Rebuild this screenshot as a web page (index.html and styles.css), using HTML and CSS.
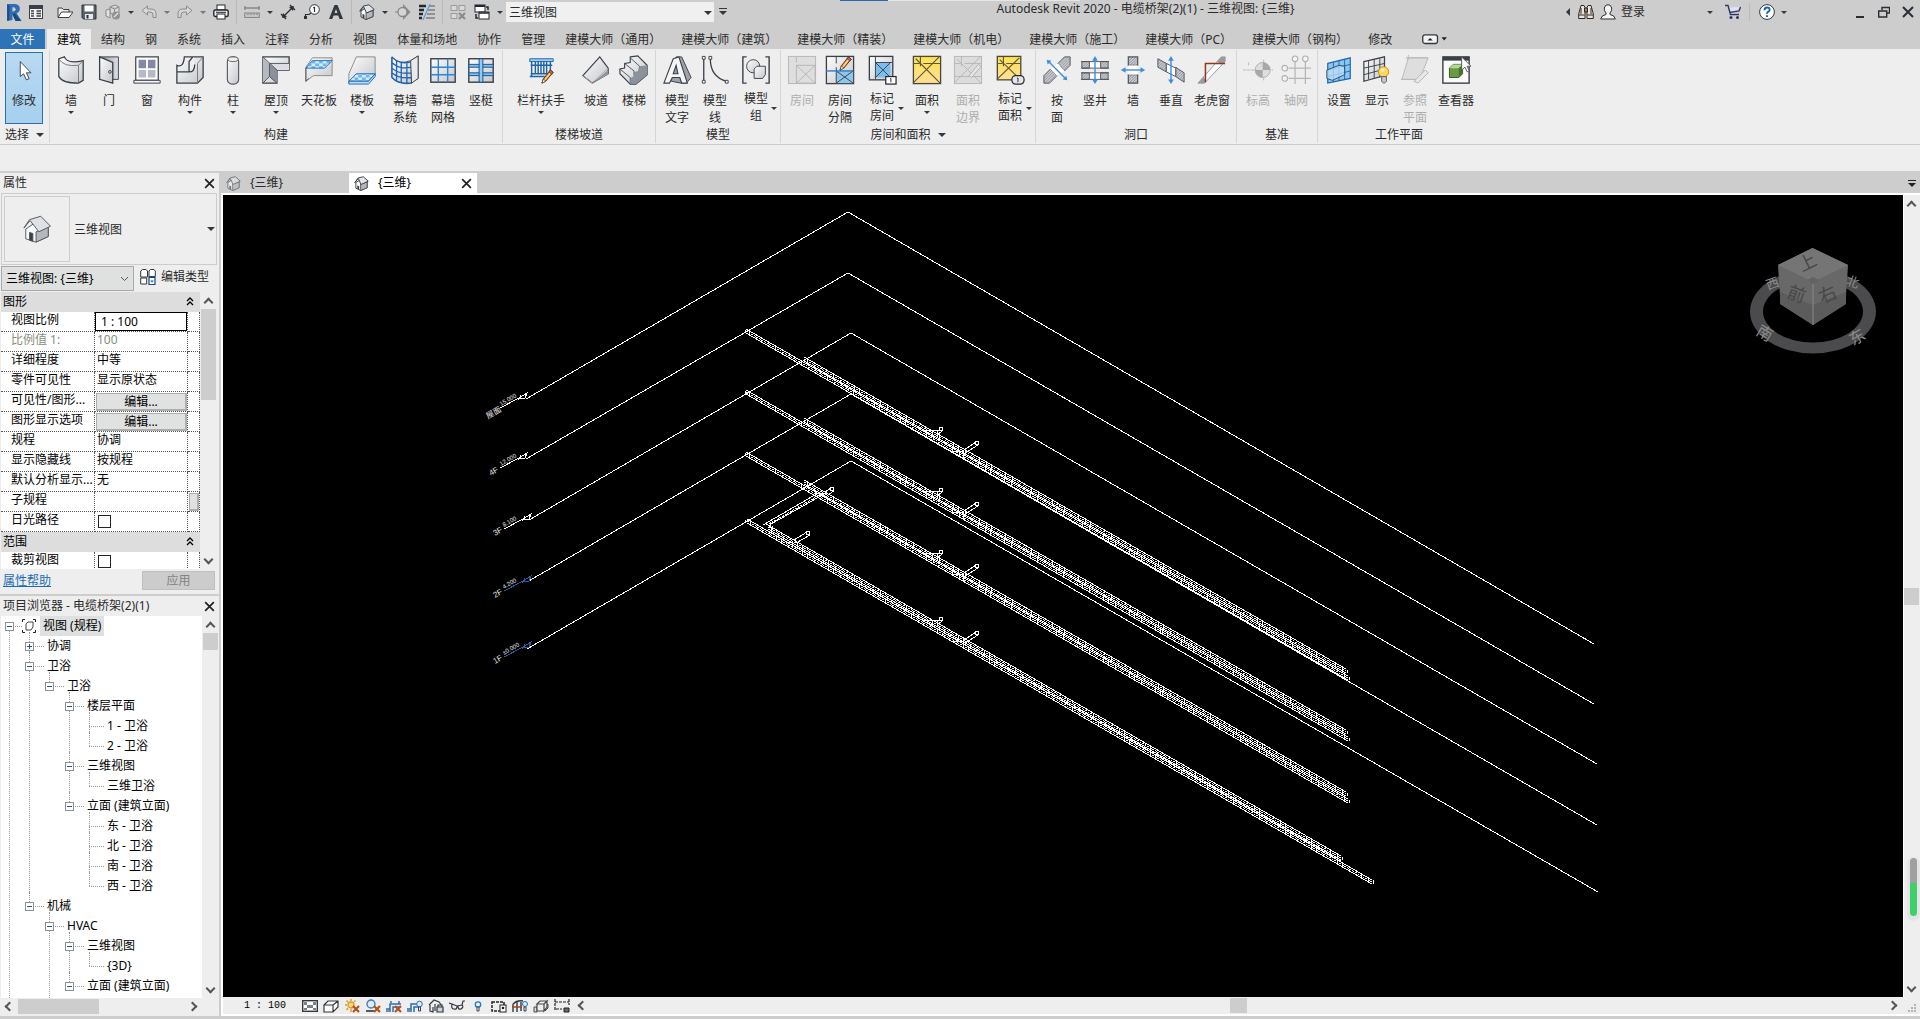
FILE: index.html
```html
<!DOCTYPE html>
<html lang="zh-CN">
<head>
<meta charset="utf-8">
<title>Autodesk Revit 2020 - 电缆桥架(2)(1) - 三维视图: {三维}</title>
<link rel="stylesheet" href="styles.css">
</head>
<body>
<svg class="defs" aria-hidden="true">
  <defs>
    <linearGradient id="metal" x1="0" y1="0" x2="1" y2="1"><stop offset="0" stop-color="#fdfdfd"/><stop offset="1" stop-color="#c3c6cb"/></linearGradient>
    <linearGradient id="steel" x1="0" y1="0" x2="1" y2="0"><stop offset="0" stop-color="#8d939b"/><stop offset="1" stop-color="#dfe1e5"/></linearGradient>
    <linearGradient id="gold" x1="0" y1="0" x2="0" y2="1"><stop offset="0" stop-color="#ffe14f"/><stop offset="1" stop-color="#ffdf96"/></linearGradient>
    <pattern id="hatch" width="3" height="3" patternUnits="userSpaceOnUse"><rect width="3" height="3" fill="#d3d5d8"/><path d="M0 3L3 0" stroke="#777d86" stroke-width="1"/></pattern>
    <pattern id="checks" width="8" height="6" patternUnits="userSpaceOnUse"><rect width="8" height="6" fill="#d6ecfc"/><path d="M0 0h4v3H0zM4 3h4v3H4z" fill="#6fb8ee"/></pattern>
    <symbol id="house" viewBox="0 0 16 16"><path d="M2 7v6l5 2.500 7-3V6L9.500 2z" fill="#fafafa" stroke="#3b4048"/><path d="M7 15.500V8.500l7-2v6z" fill="#b4b7bb" stroke="#3b4048" stroke-width=".8"/><path d="M.8 7.200L4.500 2 10 .8l5.200 4.700L7.500 9 4.500 2.500z" fill="#e4e5e7" stroke="#3b4048"/><path d="M3.500 13.500V10l2 .8v3.500z" fill="#3b4048"/></symbol>
    <symbol id="pencil" viewBox="0 0 14 16"><path d="M1 15l1.500-4.500L10 1l3 2.500L5 13z" fill="#e98a2d" stroke="#4a2f16"/><path d="M4 11.500L11 3" stroke="#ffd790" stroke-width="1.500"/><path d="M10 1l3 2.500-1.500 2-3-2.500z" fill="#c9665c" stroke="#4a2f16" stroke-width=".7"/><path d="M1 15l1.500-4.500L5 13z" fill="#fff" stroke="#4a2f16" stroke-width=".7"/></symbol>
    <symbol id="cross" viewBox="0 0 8 8"><path d="M1 1l6 6M7 1L1 7" stroke="#b3521b" stroke-width="2.200"/></symbol>
  </defs>
</svg>
<div class="app">
  <header class="titlebar">
    <div class="qat">
      <button class="app-btn" aria-label="Revit"><svg viewBox="0 0 16 18"><path d="M2 1h7.500q4.500.5 4.500 4.500 0 3-3 4.300L15.500 17H10L7 11v5l-5 1z" fill="#2f6db3"/><path d="M7 4v4q3 .3 3-2T7 4z" fill="#cdcdcd"/><path d="M2 1l2 2v13l-2 1z" fill="#1b4c86"/><path d="M7 11l2-1.500L15.500 17H10z" fill="#174a86"/></svg></button>
      <button class="home-btn" aria-label="主页"><svg class="s16" viewBox="0 0 16 16"><rect x="1.500" y="1.500" width="13" height="13" fill="#f4f4f4" stroke="#3b4048"/><path d="M1 2h14v3H1z" fill="#3b4048"/><path d="M3 7h3M3 9.500h3M3 12h3M8.500 7H13M8.500 9.500H13M8.500 12H13" stroke="#3b4048" stroke-width="1.500"/></svg></button>
      <button class="q" aria-label="打开"><svg class="s16" viewBox="0 0 16 16"><path d="M1 13V4h4l1.500 1.500H12V8" fill="#eee" stroke="#3b4048"/><path d="M1 13.500L4.500 8H16l-4 5.500z" fill="#fff" stroke="#3b4048"/></svg></button>
      <button class="q" aria-label="保存"><svg class="s16" viewBox="0 0 16 16"><path d="M1 1h14v14H2.500L1 13.500z" fill="#5b626c" stroke="#2b3038"/><rect x="3.500" y="1.500" width="9" height="6" fill="#fff"/><rect x="4" y="10" width="8" height="5" fill="#e5e7ea"/><rect x="5.500" y="11" width="2" height="3.500" fill="#2b3038"/></svg></button>
      <button class="q" aria-label="同步"><svg class="s16" viewBox="0 0 16 16"><path d="M5 3l5-2 4 2v6l-4 2-5-2zM5 3l4.500 2L14 3M9.500 5v6" fill="#d8d8d8" stroke="#888"/><path d="M1 6l4-1v9l-4-2z" fill="#e2e2e2" stroke="#888"/><circle cx="11" cy="11.500" r="4" fill="#929292"/><path d="M9 13l4-4" stroke="#ddd" stroke-width="1.500"/></svg></button>
      <button class="dd" aria-label="更多"></button>
      <button class="q" aria-label="放弃"><svg class="s16" viewBox="0 0 16 16"><path d="M1 6.500L6.500 2v3H10q5 0 5 5v3.500h-3V11q0-3-3-3H6.500v3z" fill="#d7d7d7" stroke="#8c8c8c"/></svg></button>
      <button class="dd faded" aria-label="更多"></button>
      <button class="q" aria-label="重做"><svg class="s16" viewBox="0 0 16 16"><path d="M15 6.500L9.500 2v3H6q-5 0-5 5v3.500h3V11q0-3 3-3h2.500v3z" fill="#d7d7d7" stroke="#8c8c8c"/></svg></button>
      <button class="dd faded" aria-label="更多"></button>
      <button class="q" aria-label="打印"><svg class="s16" viewBox="0 0 16 16"><rect x="4" y="1" width="8" height="5" fill="#fff" stroke="#23282f"/><rect x=".8" y="6" width="14.400" height="6.500" rx="1.500" fill="#eee" stroke="#23282f" stroke-width="1.400"/><rect x="4" y="10" width="8" height="5" fill="#fff" stroke="#23282f"/><path d="M3 8.300h10" stroke="#23282f"/></svg></button>
      <i class="qsep"></i>
      <button class="q" aria-label="测量"><svg class="s16" viewBox="0 0 16 16"><path d="M0 4h16M1 2v4M15 2v4" stroke="#888" stroke-width="1.300"/><rect x=".7" y="9" width="14.600" height="4.500" fill="#c4c4c4" stroke="#888"/><path d="M4 9v2M7 9v2M10 9v2M13 9v2" stroke="#888"/></svg></button>
      <button class="dd" aria-label="更多"></button>
      <button class="q" aria-label="尺寸标注"><svg class="s16" viewBox="0 0 16 16"><path d="M3 13L13 3M1 10l5 5M10 1l5 5" stroke="#2b3038" stroke-width="1.300"/><path d="M2 14l1-5 4 4zM14 2l-1 5-4-4z" fill="#2b3038"/></svg></button>
      <button class="q" aria-label="标记"><svg class="s16" viewBox="0 0 16 16"><circle cx="10.500" cy="5.500" r="4.800" fill="#fff" stroke="#2b3038"/><path d="M10.500 3v5M9.300 4l1.200-1M1.500 15v-4.500H5L7 9" fill="none" stroke="#2b3038" stroke-width="1.200"/><rect x="0" y="12" width="3" height="3" fill="#2b3038"/></svg></button>
      <button class="q" aria-label="文字"><svg class="s16" viewBox="0 0 16 16"><path d="M6.500 1h3L15 15h-3.500l-1.200-3.500H5.600L4.300 15H1zM8 5L6.500 9h3z" fill="#33383f"/></svg></button>
      <i class="qsep"></i>
      <button class="q" aria-label="三维视图"><svg class="s16"><use href="#house"/></svg></button>
      <button class="dd" aria-label="更多"></button>
      <button class="q" aria-label="剖面"><svg class="s16" viewBox="0 0 16 16"><path d="M8 0l7.500 8L8 16z" fill="#888"/><circle cx="7.500" cy="8" r="4.500" fill="#d5d5d5" stroke="#888" stroke-width="1.300"/><path d="M0 8h3" stroke="#888"/></svg></button>
      <button class="q" aria-label="细线"><svg class="s16" viewBox="0 0 16 16"><path d="M0 2h7M0 6h5M0 10h4M0 14h3" stroke="#23282f" stroke-width="2.600"/><path d="M10 2h6M9 6h7M8 10h8M7 14h9" stroke="#555"/><path d="M11 0L4 16" stroke="#4aa0e8" stroke-width="1.200"/></svg></button>
      <i class="qsep"></i>
      <button class="q" aria-label="关闭隐藏窗口"><svg class="s16" viewBox="0 0 16 16"><path d="M1 1.500h6v5H1zM9 1.500h6v5H9zM1 9.500h6v5H1z" fill="#d9d9d9" stroke="#999"/><path d="M9 9l6 6M15 9l-6 6" stroke="#888" stroke-width="2"/></svg></button>
      <button class="q" aria-label="切换窗口"><svg class="s16" viewBox="0 0 16 16"><rect x="1" y="1" width="10" height="7" fill="#fff" stroke="#23282f"/><path d="M1 2h10" stroke="#23282f" stroke-width="2"/><rect x="5" y="8" width="10" height="7" fill="#fff" stroke="#23282f"/><path d="M5 9h10M2 10v4h2M14 6V3h-2" fill="none" stroke="#23282f" stroke-width="1.500"/></svg></button>
      <button class="dd" aria-label="更多"></button>
      <button class="view-combo" role="combobox" aria-label="视图"><span>三维视图</span><i class="tri"></i></button>
      <button class="customize" aria-label="自定义"><svg viewBox="0 0 8 8" class="s8"><path d="M0 .5h8" stroke="#33383f"/><path d="M0 3h8L4 7z" fill="#33383f"/></svg></button>
    </div>
    <div class="title">Autodesk Revit 2020 - 电缆桥架(2)(1) - 三维视图: {三维}</div>
    <div class="info">
      <button class="collapse" aria-label="折叠"><svg viewBox="0 0 4 8"><path d="M4 0v8L0 4z" fill="#33383f"/></svg></button>
      <button class="q" aria-label="搜索"><svg class="s16" viewBox="0 0 16 16"><path d="M3 1.500h3l1 2v11H.7V10zM13 1.500h-3l-1 2v11h6.300V10zM6.500 4h3v4h-3z" fill="#e9e5e0" stroke="#33261f"/><path d="M1 11h5.500M9.500 11H15M3 4v6M13 4v6" stroke="#33261f"/></svg></button>
      <button class="login"><svg class="s16" viewBox="0 0 16 16"><path d="M.7 15q.8-4 5.300-4.500V9Q4 7 4.300 4 5 .7 8 .7T11.700 4Q12 7 10 9v1.500q4.500.5 5.300 4.500z" fill="#f5f5f5" stroke="#2c2f35"/></svg><span>登录</span><i class="tri small"></i></button>
      <button class="cart" aria-label="商店"><svg class="s16" viewBox="0 0 16 16"><path d="M0 1.500h3l2.500 9H14M3.500 3.500L5 8.500l9-1.500 1.500-4" fill="#dfe3ee" stroke="#2b3463" stroke-width="1.400"/><circle cx="6" cy="13.500" r="1.500" fill="#2b3463"/><circle cx="12.500" cy="13.500" r="1.500" fill="#2b3463"/></svg></button>
      <button class="help" aria-label="帮助"><svg class="s16" viewBox="0 0 16 16"><circle cx="8" cy="8" r="7.400" fill="#fff" stroke="#33383f"/><path d="M5.500 6.200q0-2.700 2.600-2.700t2.500 2.200q0 1.300-1.300 2T8 9.800" fill="none" stroke="#1763a6" stroke-width="1.900"/><path d="M7 11.200h2v1.800H7z" fill="#1763a6"/></svg><i class="tri small"></i></button>
      <div class="win">
        <button aria-label="最小化"><svg viewBox="0 0 12 12"><path d="M2 11h8" stroke="#2a2d33" stroke-width="2"/></svg></button>
        <button aria-label="还原"><svg viewBox="0 0 12 12"><path d="M4 4V1.500h7.500V7H9M4 1.500h7.500" fill="none" stroke="#2a2d33" stroke-width="1.400"/><path d="M.7 5h8v6h-8z" fill="none" stroke="#2a2d33" stroke-width="1.400"/></svg></button>
        <button aria-label="关闭"><svg viewBox="0 0 12 12"><path d="M1 1l10 10M11 1L1 11" stroke="#2a2d33" stroke-width="2"/></svg></button>
      </div>
    </div>
    <i class="recorder"></i>
  </header>

  <nav class="tabs">
    <button class="file">文件</button><button class="on">建筑</button><button>结构</button><button>钢</button><button>系统</button><button>插入</button><button>注释</button><button>分析</button><button>视图</button><button>体量和场地</button><button>协作</button><button>管理</button><button>建模大师（通用）</button><button>建模大师（建筑）</button><button>建模大师（精装）</button><button>建模大师（机电）</button><button>建模大师（施工）</button><button>建模大师（PC）</button><button>建模大师（钢构）</button><button>修改</button>
    <button class="mini" aria-label="最小化功能区"><svg viewBox="0 0 24 10"><rect x=".7" y=".7" width="13.600" height="8" rx="2" fill="#f3f3f3" stroke="#33383f" stroke-width="1.200"/><path d="M5 6h5L7.500 3.500zM18 3h5l-2.500 3z" fill="#222"/></svg></button>
  </nav>

  <section class="ribbon">
    <div class="panel select">
      <div class="items"><button class="rb active"><svg class="s32" viewBox="0 0 32 32"><path d="M12 7v16l3.500-3 3 6.500 3-1.300-3-6.200h5z" fill="#fff" stroke="#3b4048"/></svg><span>修改</span></button></div>
      <div class="cap">选择 <i class="tri"></i></div>
    </div>
    <div class="panel">
      <div class="items">
        <button class="rb"><svg class="s32" viewBox="0 0 32 32"><path d="M3 4l6-2q3 8 20 4v21l-5 3Q7 30 3 23z" fill="url(#metal)" stroke="#3b4048" stroke-width="1.400"/><path d="M3 4q5 9 21 7l5-5M24 11v18" fill="none" stroke="#777" stroke-width="1"/></svg><span>墙</span><i class="tri"></i></button>
        <button class="rb"><svg class="s32" viewBox="0 0 32 32"><path d="M6 2h20v24H6z" fill="url(#steel)" stroke="#3b4048"/><path d="M6 2l14 6v22L6 26z" fill="url(#metal)" stroke="#3b4048" stroke-width="1.400"/><circle cx="17" cy="18" r="1.500" fill="none" stroke="#3b4048"/></svg><span>门</span></button>
        <button class="rb"><svg class="s32" viewBox="0 0 32 32"><rect x="4" y="2" width="24" height="25" fill="#fff" stroke="#3b4048" stroke-width="1.300"/><path d="M7 5h8v9H7zM17 5h8v9h-8z" fill="#828ba3"/><path d="M7 16h8v8H7zM17 16h8v8h-8z" fill="#b7bac4"/><path d="M2 27h28v3H2z" fill="#f5f5f5" stroke="#3b4048"/></svg><span>窗</span></button>
        <button class="rb wide"><svg class="s32" viewBox="0 0 32 32"><path d="M2 11q7 3 8-9h9l-4 5v11H2zM20 2h10v22l-6 6H2V18h13q6 0 6-8" fill="url(#metal)" stroke="#3b4048" stroke-width="1.400"/><path d="M24 9v21M30 2l-6 7" stroke="#777"/></svg><span>构件</span><i class="tri"></i></button>
        <button class="rb"><svg class="s32" viewBox="0 0 32 32"><rect x="10" y="2" width="12" height="29" rx="5" fill="url(#metal)" stroke="#55595f" stroke-width="1.200"/><ellipse cx="16" cy="4.500" rx="5.500" ry="2.500" fill="#eee" stroke="#666"/></svg><span>柱</span><i class="tri"></i></button>
        <button class="rb wide"><svg class="s32" viewBox="0 0 32 32"><path d="M2 2h28v14H17v14H2z" fill="url(#metal)" stroke="#3b4048" stroke-width="1.400"/><path d="M2 2l7 7v14l-7 7z" fill="#b6b9bf"/><path d="M9 9h21v7H17z" fill="#dcdde6"/><path d="M9 9l8 7v14l-8-7z" fill="#8c9098"/><path d="M2 2l15 14M9 9h21M9 9v14l-7 7M9 23l8 7" fill="none" stroke="#50555e"/></svg><span>屋顶</span><i class="tri"></i></button>
        <button class="rb"><svg class="s32" viewBox="0 0 32 32"><path d="M2 13L9 3h21v19H10L2 28z" fill="url(#metal)" stroke="#888"/><path d="M9 6h21l-8 8H2z" fill="url(#checks)" stroke="#1f6db5"/><path d="M2 14v14l3-3" fill="none" stroke="#555"/></svg><span>天花板</span></button>
        <button class="rb wide"><svg class="s32" viewBox="0 0 32 32"><path d="M2 20L10 2h20v20L22 30H2z" fill="url(#metal)" stroke="#888"/><path d="M10 20h20l-7 8H2z" fill="url(#checks)" stroke="#1f6db5"/><path d="M2 28h21l7-8v3l-7 8H2z" fill="#b9dcf7" stroke="#1f6db5"/></svg><span>楼板</span><i class="tri"></i></button>
        <button class="rb"><svg class="s32" viewBox="0 0 32 32"><path d="M2 2q8 9 20 4l8-5v24l-8 5q-15 1-20-6z" fill="url(#metal)" stroke="#555"/><path d="M2 2v22M7 6v22M12 8v22M18 8v22M23 7v23M2 8q8 8 21 5M2 14q8 7 21 5M2 19q8 7 21 5M2 24q8 8 21 6M2 2q8 9 21 5" fill="none" stroke="#1f66b0" stroke-width="1.400"/><path d="M22 6l8-5v24l-7 5z" fill="#e9eaec" stroke="#3b4048"/></svg><span>幕墙<br>系统</span></button>
        <button class="rb"><svg class="s32" viewBox="0 0 32 32"><rect x="3" y="4" width="26" height="25" fill="url(#metal)" stroke="#3b4048" stroke-width="1.500"/><path d="M11 4v25M21 4v25M3 13h26M3 21h26" stroke="#2f86d3" stroke-width="1.500"/></svg><span>幕墙<br>网格</span></button>
        <button class="rb"><svg class="s32" viewBox="0 0 32 32"><rect x="3" y="4" width="26" height="25" fill="url(#metal)" stroke="#3b4048" stroke-width="1.500"/><path d="M3 10h26v3H3zM3 19h26v3H3z" fill="#7fc0f3" stroke="#174f86"/><rect x="14" y="4" width="4" height="25" fill="#8fcaf7" stroke="#174f86"/></svg><span>竖梃</span></button>
      </div>
      <div class="cap">构建</div>
    </div>
    <div class="panel">
      <div class="items">
        <button class="rb rail"><svg class="s32" viewBox="0 0 32 32"><path d="M4 4h25v3H4z" fill="#9ad0fa" stroke="#1d63a8"/><path d="M5 11h23M5 20h23M6 7v16M10 7v13M13 7v13M16 7v13M19 7v13M22 7v13M26 7v13M4 23h16" stroke="#1d63a8" stroke-width="1.500"/><use href="#pencil" x="16" y="15" width="14" height="16"/></svg><span>栏杆扶手</span><i class="tri"></i></button>
        <button class="rb"><svg class="s32" viewBox="0 0 32 32"><path d="M2 22L20 2l9 12v6L12 30z" fill="url(#metal)" stroke="#3b4048" stroke-width="1.300"/><path d="M2 22l10 8 17-16" fill="none" stroke="#aaa"/><path d="M12 30l17-14v5z" fill="#8f949c"/></svg><span>坡道</span></button>
        <button class="rb"><svg class="s32" viewBox="0 0 32 32"><path d="M12 2l8-1 10 10v10L18 31h-6L1 20v-5l5-1V9l6-1z" fill="url(#metal)" stroke="#3b4048" stroke-width="1.200"/><path d="M12 3l10 9-1 6M6 9l10 8v6M1 15l11 9v6" fill="none" stroke="#50555e"/><path d="M22 12l8-1v10L18 31l-6-1 1-6 3-1v-5l5-1z" fill="#8c929c"/></svg><span>楼梯</span></button>
      </div>
      <div class="cap">楼梯坡道</div>
    </div>
    <div class="panel">
      <div class="items">
        <button class="rb"><svg class="s32" viewBox="0 0 32 32"><path d="M15 2h6l10 22-5 6H20L10 28l-2-4z" fill="#9da1a8" stroke="#3b4048"/><path d="M12 4l6-2 9 28h-6l-2-6h-8l-3 6H2zM15 11l-3 9h5z" fill="#f6f6f6" stroke="#3b4048" stroke-width="1.200"/></svg><span>模型<br>文字</span></button>
        <button class="rb"><svg class="s32" viewBox="0 0 32 32"><path d="M4 4v24M11 4q0 19 17 24" fill="none" stroke="#3b4048" stroke-width="1.400"/><path d="M2.500 1.500h3v3h-3zM2.500 27h3v3h-3zM9.500 1.500h3v3h-3zM27 27h3v3h-3z" fill="#fff" stroke="#3b4048"/></svg><span>模型<br>线</span></button>
        <button class="rb side"><svg class="s32" viewBox="0 0 32 32"><path d="M6 2H2v28h4M26 2h4v28h-4" fill="none" stroke="#3b4048" stroke-width="1.500"/><circle cx="13" cy="12" r="7" fill="url(#metal)" stroke="#3b4048"/><path d="M14 15l3-3h9v9l-3 4h-9z" fill="url(#metal)" stroke="#3b4048"/></svg><span>模型<br>组</span><i class="tri"></i></button>
      </div>
      <div class="cap">模型</div>
    </div>
    <div class="panel">
      <div class="items">
        <button class="rb off" disabled><svg class="s32" viewBox="0 0 32 32"><rect x="1.500" y="1.500" width="29" height="29" fill="#dedede" stroke="#b5b5b5"/><path d="M10 11h20v19H10zM10 2v6M10 11l20 19M30 11L10 30" fill="none" stroke="#b5b5b5"/></svg><span>房间</span></button>
        <button class="rb"><svg class="s32" viewBox="0 0 32 32"><rect x="1.500" y="1.500" width="29" height="29" fill="url(#metal)" stroke="#3b4048" stroke-width="1.400"/><path d="M12 17h18v13H12z" fill="#8fc6ee"/><path d="M12 2v7M12 13v17M12 30l18-13M12 17l18 13" stroke="#3b4048"/><path d="M1 17h29" stroke="#2a7dc9" stroke-width="1.500"/><use href="#pencil" x="15" y="1" width="14" height="16"/></svg><span>房间<br>分隔</span></button>
        <button class="rb side tag"><svg class="s32" viewBox="0 0 32 32"><rect x="2.500" y="1.500" width="25" height="25" fill="url(#metal)" stroke="#3b4048" stroke-width="1.400"/><path d="M9 8h16v16H9z" fill="#7dbdea"/><path d="M9 2v24M9 8h18M9 24L25 8M9 8l16 16" stroke="#3b4048"/><rect x="20" y="23" width="11" height="8" fill="#fff" stroke="#23282f" stroke-width="1.300"/><path d="M24.500 25.500l1-.5v4" fill="none" stroke="#23282f"/></svg><span>标记<br>房间</span><i class="tri"></i></button>
        <button class="rb area"><svg class="s32" viewBox="0 0 32 32"><rect x="1.500" y="1.500" width="29" height="29" fill="url(#gold)" stroke="#4b4a3a" stroke-width="1.400"/><path d="M1 9h7M12 9h18M9 2v10M1 30L29 2M4 4l26 26" stroke="#5d5841" stroke-width="1.200"/></svg><span>面积</span><i class="tri"></i></button>
        <button class="rb off" disabled><svg class="s32" viewBox="0 0 32 32"><rect x="1.500" y="1.500" width="29" height="29" fill="#dcdcdc" stroke="#b5b5b5"/><path d="M1 9h7M12 9h18M9 2v10M1 30L29 2M4 4l26 26M1 23h29" stroke="#b5b5b5"/><path d="M17 22l10-12 3 2-10 12z" fill="#e5e5e5" stroke="#b0b0b0"/></svg><span>面积<br>边界</span></button>
        <button class="rb side tag"><svg class="s32" viewBox="0 0 32 32"><rect x="2.500" y="1.500" width="25" height="25" fill="url(#gold)" stroke="#4b4a3a" stroke-width="1.400"/><path d="M2 9h6M12 9h15M9 2v10M2 26L26 3M5 5l22 21" stroke="#5d5841" stroke-width="1.200"/><rect x="18" y="22" width="13" height="9" rx="4" fill="#e6e6e6" stroke="#23282f" stroke-width="1.300"/><path d="M23.500 25l1-.5v4.500" fill="none" stroke="#23282f"/></svg><span>标记<br>面积</span><i class="tri"></i></button>
      </div>
      <div class="cap">房间和面积 <i class="tri"></i></div>
    </div>
    <div class="panel">
      <div class="items">
        <button class="rb"><svg class="s32" viewBox="0 0 32 32"><path d="M2 30v-8l7-7 7 7-8 8z" fill="url(#hatch)" stroke="#50555e"/><path d="M17 9l7-7h6v9l-6 6z" fill="url(#hatch)" stroke="#50555e"/><path d="M9 15l8-6 7 8-8 5z" fill="#fff"/><path d="M7 7l18 18" stroke="#3e8ede" stroke-width="1.500"/><path d="M5 5l5 1-4 4zM27 27l-5-1 4-4z" fill="#3e8ede"/></svg><span>按<br>面</span></button>
        <button class="rb"><svg class="s32" viewBox="0 0 32 32"><path d="M10 7h12v7H10zM10 19h12v7H10z" fill="#fff"/><path d="M2 7h8v7H2zM22 7h8v7h-8zM2 19h8v7H2zM22 19h8v7h-8z" fill="url(#hatch)" stroke="#50555e"/><path d="M1 7h30M1 14h30M1 19h30M1 26h30" stroke="#50555e"/><path d="M16 4v25" stroke="#3e8ede" stroke-width="1.500"/><path d="M16 1l3 5h-6zM16 31l3-5h-6z" fill="#3e8ede"/></svg><span>竖井</span></button>
        <button class="rb"><svg class="s32" viewBox="0 0 32 32"><path d="M11 2h10v9H11zM11 21h10v9H11z" fill="url(#hatch)" stroke="#50555e" stroke-width="1.300"/><path d="M11 11h10v10H11z" fill="#fff"/><path d="M6 16h20" stroke="#3e8ede" stroke-width="1.500"/><path d="M3 16l5-3v6zM29 16l-5-3v6z" fill="#3e8ede"/></svg><span>墙</span></button>
        <button class="rb"><svg class="s32" viewBox="0 0 32 32"><path d="M2 4l9 5v9l-9-5zM21 13l9 6v10l-9-6z" fill="url(#hatch)" stroke="#50555e"/><path d="M11 9l10 5v9l-10-5z" fill="#fff" stroke="#50555e"/><path d="M16 4v24" stroke="#3e8ede" stroke-width="1.500"/><path d="M16 1l3 5h-6zM16 31l3-5h-6z" fill="#3e8ede"/></svg><span>垂直</span></button>
        <button class="rb look"><svg class="s32" viewBox="0 0 32 32"><path d="M1 30L26 2h4v5L8 30z" fill="#fafafa" stroke="#999"/><path d="M21 7l5-5h4v5l-4 3zM1 30l6-7 3 5-2 2z" fill="#999ca3"/><path d="M9 29V9h21" fill="none" stroke="#8f3b1b" stroke-width="1.600"/></svg><span>老虎窗</span></button>
      </div>
      <div class="cap">洞口</div>
    </div>
    <div class="panel">
      <div class="items">
        <button class="rb off" disabled><svg class="s32" viewBox="0 0 32 32"><path d="M0 16h12M6 8v4M11 16h21M22 5v22" stroke="#b5b5b5" stroke-dasharray="3 1"/><circle cx="21" cy="16" r="8" fill="#ddd" stroke="#b0b0b0"/><path d="M21 8a8 8 0 0 1 8 8h-8zM21 24a8 8 0 0 1-8-8h8z" fill="#a8a8a8"/></svg><span>标高</span></button>
        <button class="rb off" disabled><svg class="s32" viewBox="0 0 32 32"><path d="M15 7v24M26 7v24M8 14h24M8 25h24" stroke="#b5b5b5" stroke-width="1.300"/><g fill="#f4f4f4" stroke="#b0b0b0" stroke-width="1.200"><circle cx="15" cy="4" r="3"/><circle cx="26" cy="4" r="3"/><circle cx="4" cy="14" r="3"/><circle cx="4" cy="25" r="3"/></g></svg><span>轴网</span></button>
      </div>
      <div class="cap">基准</div>
    </div>
    <div class="panel">
      <div class="items">
        <button class="rb"><svg class="s32" viewBox="0 0 32 32"><path d="M4 9l24-6v22L4 30z" fill="#8cc7f3" stroke="#1f66b0" stroke-width="1.300"/><path d="M10 8v21M16 6v21M22 5v21M4 16l24-6M4 23l24-6" stroke="#1f66b0"/><path d="M3 16l13-5 6 1v9l-13 6-6-2z" fill="#bfdff5" fill-opacity=".75" stroke="#2b4e6e"/></svg><span>设置</span></button>
        <button class="rb"><svg class="s32" viewBox="0 0 32 32"><path d="M2 7l22-5v20L2 28z" fill="url(#metal)" stroke="#3b4048" stroke-width="1.300"/><path d="M7 6v20M13 5v20M19 4v20M2 14l22-5M2 21l22-6" stroke="#3b4048"/><circle cx="23" cy="18" r="5.500" fill="#ffd45c" stroke="#c68b1d"/><path d="M21 23h5v5l-2 2h-1l-2-2z" fill="#c6c9ce" stroke="#555"/><circle cx="22" cy="16" r="2" fill="#fff3b8"/></svg><span>显示</span></button>
        <button class="rb off" disabled><svg class="s32" viewBox="0 0 32 32"><path d="M9 3h21l-9 23H2z" fill="#dedede" stroke="#b8b8b8"/><path d="M6 3h24M9 0l-1 6M1 26h20" stroke="#b8b8b8"/><path d="M15 28l12-12 3 3-11 11z" fill="#e8e8e8" stroke="#b0b0b0"/></svg><span>参照<br>平面</span></button>
        <button class="rb look"><svg class="s32" viewBox="0 0 32 32"><rect x="2" y="2" width="28" height="28" fill="#fafafa" stroke="#3b4048" stroke-width="1.500"/><path d="M2 2h28v4H2z" fill="#3b4048"/><path d="M9 14l4-4h10v10l-4 4H9z" fill="#6b9a43" stroke="#35551c"/><path d="M9 14l4-4h10l-4 4z" fill="#b4d793"/><path d="M19 14l4-4v10l-4 4z" fill="#4c7330"/><path d="M22 2v14l3.500-3 2.500 5 2-1-2-5h4z" fill="#fff" stroke="#555"/></svg><span>查看器</span></button>
      </div>
      <div class="cap">工作平面</div>
    </div>
  </section>
  <div class="options"></div>

  <main class="work">
    <aside class="left">
      <section class="props">
        <div class="ptitle"><span>属性</span><button aria-label="关闭属性"><svg viewBox="0 0 12 12"><path d="M2 2l8 8M10 2l-8 8" stroke="#222" stroke-width="1.600"/></svg></button></div>
        <button class="type"><span class="thumb"><svg class="s32" viewBox="0 0 16 16"><g stroke-width=".5" stroke="#50555e"><path d="M2 8v5.200L7.500 15 14 12V7L9.500 3z" fill="#fbfbfb"/><path d="M7.500 15V9.500L14 6.500V12z" fill="#b5b8bc"/><path d="M1 7.500L4 3l6-1.800 5.200 5.300L9 9.500 4.300 3.500 1 7.500z" fill="#dfe1e3"/><path d="M4 14V9.800l1.800.6v4.200z" fill="#3b4048"/></g></svg></span><span class="tname">三维视图</span><i class="tri"></i></button>
        <div class="inst">
          <select aria-label="实例"><option>三维视图: {三维}</option></select>
          <button class="edit-type"><svg class="s16" viewBox="0 0 16 16"><path d="M.7 8V2l2-1.500H6L7.500 2v6zM9 7V2l1.500-1.500H14L15.300 2v5M.7 9h6v6h-6z" fill="#fff" stroke="#33383f"/><path d="M9 7.500h6v8H9z" fill="#fff" stroke="#1c4a78" stroke-width="1.200"/><path d="M10 11.500h4l-2 2z" fill="#1c6ab0"/><path d="M9 8.500h6" stroke="#1c4a78"/></svg><span>编辑类型</span></button>
        </div>
        <div class="pgrid">
          <table>
            <colgroup><col class="c1"><col class="c2"><col class="c3"></colgroup>
            <tbody>
            <tr class="grp"><th colspan="3"><div>图形<svg viewBox="0 0 8 9"><path d="M1 4l3-3 3 3M1 8l3-3 3 3" fill="none" stroke="#000" stroke-width="1.300"/></svg></div></th></tr>
            <tr><td><label for="scale">视图比例</label></td><td class="box"><input id="scale" class="scale" type="text" value="1 : 100"></td><td></td></tr>
            <tr class="dim"><td>比例值 1:</td><td>100</td><td></td></tr>
            <tr><td>详细程度</td><td>中等</td><td></td></tr>
            <tr><td>零件可见性</td><td>显示原状态</td><td></td></tr>
            <tr><td>可见性/图形...</td><td class="full"><button class="edit">编辑...</button></td><td></td></tr>
            <tr><td>图形显示选项</td><td class="full"><button class="edit">编辑...</button></td><td></td></tr>
            <tr><td>规程</td><td>协调</td><td></td></tr>
            <tr><td>显示隐藏线</td><td>按规程</td><td></td></tr>
            <tr><td>默认分析显示...</td><td>无</td><td></td></tr>
            <tr><td>子规程</td><td></td><td class="full"><button class="edit" aria-label="关联参数"></button></td></tr>
            <tr><td><label for="sun">日光路径</label></td><td><input id="sun" type="checkbox"></td><td></td></tr>
            <tr class="grp"><th colspan="3"><div>范围<svg viewBox="0 0 8 9"><path d="M1 4l3-3 3 3M1 8l3-3 3 3" fill="none" stroke="#000" stroke-width="1.300"/></svg></div></th></tr>
            <tr><td><label for="crop">裁剪视图</label></td><td><input id="crop" type="checkbox"></td><td></td></tr>
            </tbody>
          </table>
          <div class="vs"><button class="ar up" aria-label="向上"></button><i class="th th-props"></i><button class="ar down" aria-label="向下"></button></div>
        </div>
        <div class="pfoot"><a href="#help">属性帮助</a><button disabled>应用</button></div>
      </section>
      <section class="browser">
        <div class="ptitle"><span>项目浏览器 - 电缆桥架(2)(1)</span><button aria-label="关闭项目浏览器"><svg viewBox="0 0 12 12"><path d="M2 2l8 8M10 2l-8 8" stroke="#222" stroke-width="1.600"/></svg></button></div>
        <div class="bbody">
          <div class="tree">
            <ul>
              <li class="root more"><div class="row"><button class="ex" aria-label="折叠"></button><svg class="vico" viewBox="0 0 14 14"><path d="M.5 3V.5H3M11 .5h2.500V3M13.500 11v2.500H11M3 13.500H.5V11" fill="none" stroke="#222"/><path d="M4 5l2-2h5v5l-2 3H4z" fill="#fff" stroke="#444"/></svg><span class="sel">视图 (规程)</span></div>
              <ul>
                <li><div class="row"><button class="ex plus" aria-label="展开"></button><span>协调</span></div></li>
                <li><div class="row"><button class="ex" aria-label="折叠"></button><span>卫浴</span></div>
                  <ul><li><div class="row"><button class="ex" aria-label="折叠"></button><span>卫浴</span></div>
                    <ul>
                      <li><div class="row"><button class="ex" aria-label="折叠"></button><span>楼层平面</span></div>
                        <ul><li><div class="row"><span>1 - 卫浴</span></div></li><li><div class="row"><span>2 - 卫浴</span></div></li></ul></li>
                      <li><div class="row"><button class="ex" aria-label="折叠"></button><span>三维视图</span></div>
                        <ul><li><div class="row"><span>三维卫浴</span></div></li></ul></li>
                      <li><div class="row"><button class="ex" aria-label="折叠"></button><span>立面 (建筑立面)</span></div>
                        <ul><li><div class="row"><span>东 - 卫浴</span></div></li><li><div class="row"><span>北 - 卫浴</span></div></li><li><div class="row"><span>南 - 卫浴</span></div></li><li><div class="row"><span>西 - 卫浴</span></div></li></ul></li>
                    </ul></li></ul></li>
                <li><div class="row"><button class="ex" aria-label="折叠"></button><span>机械</span></div>
                  <ul><li class="more"><div class="row"><button class="ex" aria-label="折叠"></button><span>HVAC</span></div>
                    <ul>
                      <li><div class="row"><button class="ex" aria-label="折叠"></button><span>三维视图</span></div>
                        <ul><li><div class="row"><span>{3D}</span></div></li></ul></li>
                      <li><div class="row"><button class="ex" aria-label="折叠"></button><span>立面 (建筑立面)</span></div></li>
                    </ul></li></ul></li>
              </ul></li>
            </ul>
          </div>
          <div class="vs"><button class="ar up" aria-label="向上"></button><i class="th th-tree"></i><button class="ar down" aria-label="向下"></button></div>
        </div>
        <div class="hs"><button class="ar left-ar" aria-label="向左"></button><i class="th th-h"></i><button class="ar right-ar" aria-label="向右"></button></div>
      </section>
    </aside>

    <section class="docs">
      <div class="dtabs">
        <button class="dt"><svg class="s16"><use href="#house"/></svg><span>{三维}</span></button>
        <div class="dt on"><svg class="s16"><use href="#house"/></svg><span>{三维}</span><button aria-label="关闭视图"><svg viewBox="0 0 12 12"><path d="M2 2l8 8M10 2l-8 8" stroke="#222" stroke-width="1.600"/></svg></button></div>
        <button class="dmenu" aria-label="视图列表"><svg viewBox="0 0 8 8" class="s8"><path d="M0 .5h8" stroke="#222"/><path d="M0 3h8L4 7z" fill="#222"/></svg></button>
      </div>
      <div class="vrow">
        <svg class="canvas" viewBox="223 195 1680 802" preserveAspectRatio="xMidYMid meet">
          <defs>
            <g id="branches" fill="none" stroke="#fff">
              <path d="M926 430h11v7M938 431l2-1M937 435l5-4M952 451h11v7M964 450l12-8M965 453l13-8"/>
              <circle cx="941" cy="429" r="2"/><circle cx="977" cy="443" r="2"/>
            </g>
            <g id="tray" fill="none" stroke="#fff">
              <path d="M746 329l602 347M746 333l602 347M804 357l542 312M804 361l542 312M745 330v3M1347 670v3M1349 677v3"/>
              <path d="M746 331l602 347M804 359l542 312" stroke-dasharray="2 1"/>
              <path d="M806 363l540 312" stroke-dasharray="1 2"/>
            </g>
            <path id="head" d="M0 0l19-10 8-5-2 5-6 1 2-4" fill="none"/>
          </defs>
          <g class="lines">
            <path d="M526 399l322-187 746 432M526 459l322-186 746 431M529 520l322-187 746 431M527 582l324-188 746 431M527 649l324-188 747 431"/>
            <use href="#head" x="500" y="408" stroke="#fff"/><use href="#head" x="500" y="468" stroke="#fff"/><use href="#head" x="504" y="529" stroke="#fff"/><use href="#head" x="504" y="591" stroke="#2d5ca6"/><use href="#head" x="504" y="657" stroke="#2d5ca6"/>
            <use href="#tray"/><use href="#tray" y="61"/><use href="#tray" y="123"/>
            <path d="M747 519l625 361M747 523l625 361M766 524l575 332M768 529l573 331M745 520v3M1342 857v3M1373 880v4"/>
            <path d="M747 521l625 361M768 527l573 331M770 532l571 329" stroke-dasharray="2 1"/>
            <use href="#branches"/><use href="#branches" y="61"/><use href="#branches" y="123"/><use href="#branches" y="190"/>
            <path d="M763 525l57-33M771 524l55-31M770 528v-6M772 530v-4M825 492l6-4M829 494l5-3M786 542h6v5M794 540l13-8M796 543l14-8"/>
            <path d="M769 524l54-31" stroke-dasharray="2 1"/>
            <circle cx="832" cy="489" r="2"/><circle cx="808" cy="533" r="2"/>
          </g>
          <g class="lvl">
            <text class="nm" transform="translate(488 419) rotate(-30)">屋面</text><text transform="translate(501 406) rotate(-30)">15.000</text>
            <text class="nm" transform="translate(491 476) rotate(-30)">4F</text><text transform="translate(501 466) rotate(-30)">12.000</text>
            <text class="nm" transform="translate(495 536) rotate(-30)">3F</text><text transform="translate(504 527) rotate(-30)">8.100</text>
            <text class="nm" transform="translate(495 598) rotate(-30)">2F</text><text transform="translate(504 589) rotate(-30)">4.200</text>
            <text class="nm" transform="translate(495 664) rotate(-30)">1F</text><text transform="translate(504 655) rotate(-30)">±0.000</text>
          </g>
          <g class="cube">
            <path fill-rule="evenodd" fill="#4b4b4d" d="M1750 311.500a63 42 0 1 1 126 0 63 42 0 1 1-126 0zM1763 311.500a50 31 0 1 0 100 0 50 31 0 1 0-100 0z"/>
            <text class="n" transform="translate(1768 290) rotate(-20)">西</text><text class="n" transform="translate(1845 284) rotate(20)">北</text>
            <path d="M1778 265l34.500-17 35.500 17-2.500 39-32.500 21-32.500-21z" fill="#686868"/>
            <path d="M1778 265l34.500-17 35.500 17-35 17z" fill="#757575"/>
            <path d="M1780 292l33 13 33-13v12l-33 21-33-21z" fill="#5c5c5c"/>
            <path d="M1813 283v42" stroke="#888"/><path d="M1807 280l6-3 6 3-6 4z" fill="#626262"/>
            <text class="n b" transform="translate(1755 334) rotate(30)">南</text><text class="n b" transform="translate(1853 346) rotate(-30)">东</text>
            <text class="f" transform="translate(1802 272) rotate(-26)">上</text><text class="f" transform="translate(1786 297) rotate(20)">前</text><text class="f" transform="translate(1822 304) rotate(-24)">右</text>
          </g>
        </svg>
        <div class="vs wide-vs"><button class="ar up" aria-label="向上"></button><i class="th th-view"></i><i class="pill"></i><button class="ar down" aria-label="向下"></button></div>
      </div>
      <div class="vbar">
        <button class="vscale">1 : 100</button>
        <div class="vicons">
          <button aria-label="详细程度"><svg viewBox="0 0 16 14"><rect x=".7" y="1.700" width="14.600" height="10.600" fill="#fff" stroke="#33383f" stroke-width="1.400"/><path d="M2 3h3v3H2zM11 3h3v3h-3zM5 6h6v3H5zM2 9h3v2H2zM11 9h3v2h-3z" fill="#7b8087"/></svg></button>
          <button aria-label="视觉样式"><svg viewBox="0 0 16 14"><path d="M1 6l4-4h10v6l-5 5H1zM1 6h9v7M10 6l5-4" fill="#fff" stroke="#33383f" stroke-width="1.200"/></svg></button>
          <button aria-label="日光路径"><svg viewBox="0 0 16 14"><circle cx="7" cy="6" r="3" fill="#ffd979" stroke="#dc9b2c" stroke-width="1.300"/><path d="M7 0v2M1 6h2M2.500 1.500L4 3M11.500 1.500L10 3M7 10v3M2.500 11L4 9" stroke="#dc9b2c" stroke-width="1.400"/><use href="#cross" x="8" y="6" width="8" height="8"/></svg></button>
          <button aria-label="阴影"><svg viewBox="0 0 16 14"><circle cx="6" cy="5" r="4" fill="#d9edfb" stroke="#3a78b5" stroke-width="1.300"/><path d="M1 12h8" stroke="#55585e" stroke-width="2"/><use href="#cross" x="8" y="6" width="8" height="8"/></svg></button>
          <button aria-label="裁剪"><svg viewBox="0 0 16 14"><path d="M4 13V5h11M0 10h4M7 13V8h8M13 5V2" fill="none" stroke="#2470b5" stroke-width="1.500"/><path d="M0 12h3M4 3h2" stroke="#222"/><use href="#cross" x="8" y="6" width="8" height="8"/></svg></button>
          <button aria-label="显示裁剪"><svg viewBox="0 0 16 14"><path d="M4 13V5h7M0 10h4M7 13V8h4" fill="none" stroke="#2470b5" stroke-width="1.500"/><path d="M0 12h3" stroke="#222"/><circle cx="12.500" cy="5" r="2.800" fill="#def" stroke="#2470b5"/><path d="M11.500 8h2v4h-2z" fill="#eee" stroke="#345"/></svg></button>
          <button aria-label="锁定三维"><svg viewBox="0 0 16 14"><path d="M1 6l5-5 5 2 3 4M2 6v6l3 1V8M7 12V5" fill="none" stroke="#33383f" stroke-width="1.200"/><path d="M9 8h6v5H9zM10 8V6h4v2" fill="#ccd6df" stroke="#33383f" stroke-width="1.200"/></svg></button>
          <button aria-label="临时隐藏"><svg viewBox="0 0 16 14"><path d="M0 4l3 1 5 2 5-1M3 5q-1 5 2 5 3 1 3-3M9 7q0 4 3 3 3-2 1-4l1-4h2" fill="none" stroke="#33383f" stroke-width="1.200"/></svg></button>
          <button aria-label="显示隐藏"><svg viewBox="0 0 16 14"><circle cx="8" cy="5.500" r="2.700" fill="#e3f2ff" stroke="#1f78c4" stroke-width="1.300"/><path d="M7 8h2v4H7z" fill="#fff" stroke="#345"/></svg></button>
          <button aria-label="临时属性"><svg viewBox="0 0 16 14"><path d="M1 3h12v9H1z" fill="none" stroke="#222" stroke-width="1.500" stroke-dasharray="3 1"/><rect x="9" y="6" width="6" height="7" fill="#fff" stroke="#222"/><circle cx="12" cy="9" r="1.300" fill="#222"/></svg></button>
          <button aria-label="分析模型"><svg viewBox="0 0 16 14"><path d="M1 5q4-4 10-3M1 5v8M5 3v10M9 3v9" fill="none" stroke="#33383f" stroke-width="1.400"/><path d="M0 8h10" stroke="#a9441e" stroke-width="1.500"/><circle cx="13" cy="5" r="2.500" fill="#def" stroke="#2470b5"/><path d="M12 8h2v4h-2z" fill="#eee" stroke="#345"/></svg></button>
          <button aria-label="位移集"><svg viewBox="0 0 16 14"><path d="M1 8h3v5H1zM12 7l3-2v4l-3 3z" fill="#ddd" stroke="#44484f"/><path d="M4 5l3-3h7l-3 3zM4 5h7v7H4zM11 5l3-3v6l-3 4z" fill="#eee" stroke="#44484f" stroke-width="1.200"/></svg></button>
          <button aria-label="约束"><svg viewBox="0 0 16 14"><path d="M1 0v12M15 0v6M1 3h14M2 10h6" stroke="#222" stroke-width="1.200" stroke-dasharray="3 1"/><path d="M10 9h5v4h-5z" fill="#667" stroke="#222"/></svg></button>
          <button class="ar left-ar" aria-label="向左"></button>
        </div>
        <div class="vhs"><i class="th"></i></div>
        <button class="ar right-ar" aria-label="向右"></button>
        <svg class="grip" viewBox="0 0 9 9"><path d="M6 0h2v2H6zM3 3h2v2H3zM6 3h2v2H6zM0 6h2v2H0zM3 6h2v2H3zM6 6h2v2H6z" fill="#b5b5b5"/></svg>
      </div>
    </section>
  </main>
</div>
</body>
</html>
```
FILE: styles.css
```css
* { box-sizing: border-box; }
body {
  margin: 0;
  background: #cdcdcd;
  color: #2b2b2b;
  font: 12px/16px "Noto Sans", "Noto Sans CJK SC", sans-serif;
}
button, input, select { font: inherit; color: inherit; }
button {
  margin: 0;
  padding: 0;
  border: 0;
  background: none;
  display: flex;
  align-items: center;
  justify-content: center;
}
svg { display: block; flex: none; }
ul { list-style: none; margin: 0; padding: 0; }
.defs { position: absolute; width: 0; height: 0; }
.s8 { width: 8px; height: 8px; }
.s16 { width: 16px; height: 16px; }
.s32 { width: 30px; height: 32px; }
.tri {
  flex: none;
  display: inline-block;
  border: 4px solid transparent;
  border-top-color: #33383f;
  border-bottom: 0;
}
.tri.small { border-width: 3px 3px 0; }

.app { display: flex; flex-direction: column; height: 100vh; min-height: 700px; }

/* title bar */
.titlebar { position: relative; display: flex; height: 29px; }
.qat { display: flex; height: 24px; align-items: center; }
.app-btn { width: 26px; height: 24px; }
.app-btn svg { width: 17px; height: 19px; }
.home-btn { width: 27px; height: 24px; padding-right: 7px; }
.q { width: 24px; height: 24px; }
.dd { width: 12px; height: 24px; }
.dd::after { content: ""; border: 3px solid transparent; border-top-color: #33383f; border-bottom: 0; }
.dd.faded::after { border-top-color: #777; }
.qsep { width: 1px; height: 24px; margin: 0 3px; background: #b9b9b9; }
.view-combo {
  width: 208px;
  height: 20px;
  padding: 1px 2px 0 3px;
  background: #f0f0f0;
  justify-content: space-between;
}
.customize { width: 18px; height: 24px; }
.title { flex: 1; text-align: center; line-height: 18px; white-space: nowrap; }
.info { display: flex; align-items: center; height: 24px; width: 361px; }
.collapse { width: 15px; padding-left: 2px; }
.collapse svg { width: 4px; height: 8px; }
.login { width: 116px; margin-left: 2px; gap: 5px; justify-content: flex-start; }
.login .tri { margin-left: auto; margin-right: 3px; }
.cart { width: 34px; border-right: 1px solid #b9bac4; height: 18px; }
.help { width: 46px; gap: 6px; }
.win { display: flex; margin-left: auto; gap: 12px; padding-right: 6px; }
.win svg { width: 12px; height: 12px; }
.recorder {
  position: absolute;
  left: 840px;
  top: 0;
  width: 240px;
  height: 1px;
  background: linear-gradient(90deg, #2b69b0 20%, #e6e6e6 20%);
}

/* ribbon tabs */
.tabs { display: flex; height: 20px; }
.tabs button { padding: 2px 10px 0; white-space: nowrap; }
.tabs .file { width: 45px; margin-right: 2px; background: #2d73b7; color: #fff; }
.tabs .on { background: #eeeeee; color: #000; }
.tabs .mini { padding: 0 20px; }
.mini svg { width: 26px; height: 11px; }

/* ribbon */
.ribbon { display: flex; height: 96px; background: #eeeeee; border-bottom: 1px solid #cbcbcb; }
.panel {
  display: flex;
  flex-direction: column;
  justify-content: space-between;
  margin: 1px 0;
  padding: 0 2px;
  border-right: 1px solid #d5d5d5;
}
.panel:last-child { border-right: 0; }
.panel.select { width: 50px; padding: 0 5px; }
.items { display: flex; height: 76px; padding-top: 2px; }
.cap { height: 17px; text-align: center; line-height: 18px; white-space: nowrap; }
.cap .tri { margin: 0 0 2px 4px; }
.rb {
  position: relative;
  width: 38px;
  flex-direction: column;
  justify-content: flex-start;
  padding-top: 2px;
  line-height: 17px;
  white-space: nowrap;
}
.rb span { margin-top: 6px; }
.rb > .tri { border-width: 3px 3px 0; margin-top: 2px; }
.rb.wide { width: 48px; }
.rb.rail { width: 72px; }
.rb.side { width: 44px; }
.rb.tag { width: 46px; }
.rb.area, .rb.look { width: 44px; }
.rb.side span { margin-top: 4px; }
.rb.side .tri { position: absolute; right: 1px; top: 55px; margin: 0; }
.rb.off { color: #adadad; }
.rb.active { height: 72px; background: linear-gradient(#b8d9f2, #a6d0ee); border: 1px solid #2a6fae; padding-top: 1px; }
.options { height: 26px; background: #eeeeee; margin-bottom: 2px; }

/* work area */
.work { flex: 1; min-height: 0; display: flex; gap: 2px; padding-bottom: 3px; }
.left { width: 219px; display: flex; flex-direction: column; gap: 2px; }
.props, .browser { background: #eeeeee; }
.ptitle { display: flex; justify-content: space-between; align-items: center; height: 20px; padding: 0 3px; }
.ptitle button, .dt button { width: 14px; height: 14px; }
.ptitle svg, .dt button svg { width: 13px; height: 13px; }

.props { height: 421px; }
.type {
  width: 216px;
  height: 72px;
  margin-left: 1px;
  padding: 2px 0 2px 2px;
  border: 1px solid #cdcdcd;
  justify-content: flex-start;
}
.thumb { width: 66px; height: 66px; border: 1px solid #cdcdcd; display: grid; place-items: center; }
.tname { padding: 2px 0 0 4px; }
.type .tri { margin-left: auto; margin-right: 1px; }
.inst { display: flex; height: 27px; padding: 1px 0 1px 1px; }
.inst select {
  width: 133px;
  height: 25px;
  padding: 0 20px 0 4px;
  appearance: none;
  border: 1px solid #a9a9a9;
  border-radius: 0;
  background: #dfe0e0 url("data:image/svg+xml,%3Csvg xmlns='http://www.w3.org/2000/svg' width='9' height='6'%3E%3Cpath d='M1 1l3.500 3.500L8 1' fill='none' stroke='%23555'/%3E%3C/svg%3E") no-repeat right 4px center;
  color: #000;
}
.edit-type { height: 22px; margin-left: 6px; gap: 5px; }
.pgrid { display: flex; height: 277px; overflow: hidden; padding-left: 1px; }
.pgrid table { width: 199px; height: 280px; table-layout: fixed; border-collapse: separate; border-spacing: 0; background: #fff; color: #000; flex: none; }
.c1 { width: 94px; }
.c2 { width: 93px; }
.c3 { width: 12px; }
.pgrid td {
  height: 20px;
  padding: 0 0 3px 2px;
  border-right: 1px dotted #555;
  border-bottom: 1px dotted #555;
  white-space: nowrap;
  overflow: hidden;
  line-height: 16px;
}
.pgrid td:first-child { padding-left: 10px; }
.pgrid td.full { padding: 1px 0 0 1px; }
.pgrid td.box { padding-bottom: 0; }
.grp th { height: 20px; padding: 0 6px 1px 2px; background: #dddddd; font-weight: 400; text-align: left; }
.grp div { display: flex; justify-content: space-between; align-items: center; }
.grp svg { width: 8px; height: 9px; }
.dim td { color: #868e80; }
.scale { display: block; width: 92px; height: 19px; margin-left: -2px; padding: 0 5px; border: 1px solid #000; background: #fff; }
.edit { width: 100%; height: 18px; background: #e0e2e1; border: 1px solid #adadad; border-right-width: 2px; border-bottom-width: 2px; }
input[type="checkbox"] {
  appearance: none;
  display: block;
  width: 13px;
  height: 13px;
  margin: 3px 0 0 1px;
  border: 1px solid #222;
  background: #fff;
}
.pfoot { display: flex; justify-content: space-between; padding: 2px 4px 0 3px; height: 25px; }
.pfoot a { color: #1a6cb8; line-height: 20px; }
.pfoot button { width: 73px; height: 19px; background: #cccccc; border: 1px solid #bfbfbf; color: #838383; }

/* scroll bars */
.vs { display: flex; flex-direction: column; align-items: flex-start; width: 16px; margin-left: 1px; background: #eeeeee; }
.th { display: block; background: #cdcdcd; }
.vs .th { width: 15px; }
.ar { width: 15px; height: 17px; flex: none; }
.ar::after { content: ""; width: 5px; height: 5px; border: solid #555; border-width: 2px 0 0 2px; }
.up { padding-top: 3px; }
.up::after { transform: rotate(45deg); }
.down { margin-top: auto; padding-bottom: 3px; }
.down::after { transform: rotate(225deg); }
.left-ar::after { transform: rotate(-45deg); }
.right-ar::after { transform: rotate(135deg); }
.th-props { height: 91px; }
.th-tree { height: 17px; }
.th-view { height: 17px; margin-top: 376px; }
.wide-vs { width: 17px; margin: 0; border-left: 1px solid #fff; position: relative; }
.pill {
  position: absolute;
  right: 3px;
  bottom: 81px;
  width: 7px;
  height: 58px;
  border-radius: 4px;
  background: linear-gradient(#a0a0a0 43%, #3fd06c 43%);
  box-shadow: 0 2px 2px 3px #e2e4e4;
}

/* project browser */
.browser { flex: 1; min-height: 0; display: flex; flex-direction: column; }
.bbody { flex: 1; min-height: 0; display: flex; }
.tree { width: 201px; margin-left: 1px; padding-left: 4px; background: #fff; color: #000; overflow: hidden; }
.tree li { position: relative; }
.tree ul ul { padding-left: 20px; }
.row { position: relative; display: flex; align-items: center; height: 20px; padding-left: 22px; white-space: nowrap; }
.row::before { content: ""; position: absolute; left: 4px; top: 10px; width: 15px; border-top: 1px dotted #999; }
.tree li::before { content: ""; position: absolute; left: 4px; top: -4px; bottom: 0; border-left: 1px dotted #999; }
.tree li:last-child::before { bottom: auto; height: 14px; }
.tree li.more::before { height: auto; bottom: -40px; }
.tree li.root::before { top: 10px; }
.ex {
  position: absolute;
  left: 0;
  top: 6px;
  width: 9px;
  height: 9px;
  border: 1px solid #919191;
  background: linear-gradient(#1d5a9a, #1d5a9a) center / 5px 1px no-repeat, #fff;
}
.ex.plus {
  background: linear-gradient(#1d5a9a, #1d5a9a) center / 5px 1px no-repeat, linear-gradient(#1d5a9a, #1d5a9a) center / 1px 5px no-repeat, #fff;
}
.root > .row { padding-left: 17px; }
.vico { width: 14px; height: 14px; background: #fff; position: relative; }
.sel { margin-left: 4px; padding: 0 3px; background: #dfe0e1; line-height: 20px; }
.hs { display: flex; align-items: center; height: 18px; padding: 0 19px 2px 2px; }
.hs .th { width: 81px; height: 15px; margin-left: 1px; }
.hs .right-ar { margin-left: auto; }

/* views */
.docs { flex: 1; min-width: 0; display: flex; flex-direction: column; padding-left: 2px; background: linear-gradient(#cdcdcd, #cdcdcd) 0 0 / 100% 20px no-repeat, #fff; }
.dtabs { display: flex; height: 20px; flex: none; margin-bottom: 2px; }
.dt { width: 126px; display: flex; align-items: center; justify-content: flex-start; gap: 9px; padding: 0 4px 0 3px; }
.dt > .s16 { width: 15px; height: 15px; }
.dt:not(.on) > .s16 { opacity: .6; }
.dt.on { width: 128px; padding-left: 5px; background: #fff; color: #000; }
.dt.on button { margin-left: auto; }
.dmenu { margin-left: auto; width: 16px; padding-top: 2px; }
.vrow { flex: 1; min-height: 0; display: flex; }
.canvas { flex: 1; min-width: 0; height: 100%; background: #000; }
.lines { fill: none; stroke: #fff; stroke-width: 1; shape-rendering: crispEdges; }
.lvl { fill: #e4e4e4; font: 6px "Liberation Sans Narrow", "Liberation Sans", sans-serif; }
.lvl .nm { font: 8px "Liberation Sans Narrow", "Liberation Sans", "Noto Sans CJK SC", sans-serif; }
.cube .n { fill: #8c8c8c; font-size: 13px; }
.cube .b { font-size: 16px; }
.cube .f { fill: #474747; font-size: 18px; }
.vbar { display: flex; align-items: center; height: 17px; background: #eeeeee; margin-bottom: 2px; }
.vscale { padding-left: 21px; width: 74px; justify-content: flex-start; font: 10px/16px "Liberation Mono", monospace; color: #000; white-space: pre; }
.vicons { display: flex; padding-left: 2px; }
.vicons button { width: 21px; height: 16px; }
.vicons svg { width: 16px; height: 14px; }
.vhs { flex: 1; }
.vhs .th { width: 17px; height: 15px; margin-left: calc(49% + 4px); }
.grip { width: 9px; height: 9px; margin: 6px 3px 0 8px; }
```
